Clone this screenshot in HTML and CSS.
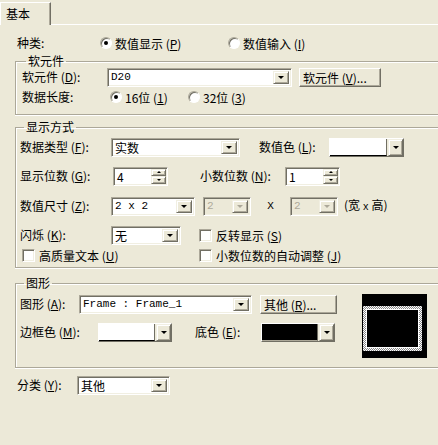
FILE: index.html
```html
<!DOCTYPE html>
<html lang="zh-CN">
<head>
    <meta charset="UTF-8">
    <title>数值显示</title>
    <link rel="stylesheet" href="styles.css">
</head>
<body>
    <div class="tabs">
        <div class="tab">基本</div>
        <div class="tab-fill"></div>
    </div>

    <div class="row kind-row">
        <span class="label w-kind">种类:</span>
        <label class="radio-opt w-opt1"><span class="radio checked"></span>数值显示 (<u>P</u>)</label>
        <label class="radio-opt"><span class="radio"></span>数值输入 (<u>I</u>)</label>
    </div>

    <fieldset class="group group-device">
        <legend>软元件</legend>
        <div class="row">
            <span class="label w-device">软元件 (<u>D</u>):</span>
            <div class="combo w-device-combo">
                <span class="combo-text mono">D20</span>
                <span class="drop"><i class="arrow"></i></span>
            </div>
            <button class="btn w-device-btn">软元件 (<u>V</u>)...</button>
        </div>
        <div class="row">
            <span class="label w-len">数据长度:</span>
            <label class="radio-opt w-opt16"><span class="radio checked"></span>16位 (<u>1</u>)</label>
            <label class="radio-opt"><span class="radio"></span>32位 (<u>3</u>)</label>
        </div>
    </fieldset>

    <fieldset class="group group-display">
        <legend>显示方式</legend>
        <div class="row">
            <span class="label w-91">数据类型 (<u>F</u>):</span>
            <div class="combo w-type">
                <span class="combo-text">实数</span>
                <span class="drop"><i class="arrow"></i></span>
            </div>
            <span class="label w-color-label gap-19">数值色 (<u>L</u>):</span>
            <div class="color-combo w-75">
                <span class="swatch"></span>
                <span class="drop"><i class="arrow"></i></span>
            </div>
        </div>
        <div class="row gap-top-9">
            <span class="label w-93">显示位数 (<u>G</u>):</span>
            <div class="spin">
                <span class="spin-text">4</span>
                <span class="spin-btns"><span class="spin-btn"><i class="arrow up"></i></span><span class="spin-btn"><i class="arrow"></i></span></span>
            </div>
            <span class="label w-85 gap-32">小数位数 (<u>N</u>):</span>
            <div class="spin">
                <span class="spin-text">1</span>
                <span class="spin-btns"><span class="spin-btn"><i class="arrow up"></i></span><span class="spin-btn"><i class="arrow"></i></span></span>
            </div>
        </div>
        <div class="row gap-top-10">
            <span class="label w-91">数值尺寸 (<u>Z</u>):</span>
            <div class="combo w-size">
                <span class="combo-text mono">2 x 2</span>
                <span class="drop"><i class="arrow"></i></span>
            </div>
            <div class="combo disabled w-48 gap-8">
                <span class="combo-text mono">2</span>
                <span class="drop"><i class="arrow"></i></span>
            </div>
            <span class="times mono">X</span>
            <div class="combo disabled w-48">
                <span class="combo-text mono">2</span>
                <span class="drop"><i class="arrow"></i></span>
            </div>
            <span class="label gap-6">(宽 <span class="mono">x</span> 高)</span>
        </div>
        <div class="row gap-top-9">
            <span class="label w-91">闪烁 (<u>K</u>):</span>
            <div class="combo w-blink">
                <span class="combo-text">无</span>
                <span class="drop"><i class="arrow"></i></span>
            </div>
            <label class="check-opt gap-18"><span class="check"></span>反转显示 (<u>S</u>)</label>
        </div>
        <div class="row checks-row">
            <label class="check-opt w-177"><span class="check"></span>高质量文本 (<u>U</u>)</label>
            <label class="check-opt"><span class="check"></span>小数位数的自动调整 (<u>J</u>)</label>
        </div>
    </fieldset>

    <fieldset class="group group-shape">
        <legend>图形</legend>
        <div class="shape-body">
            <div class="shape-fields">
                <div class="row">
                    <span class="label w-59">图形 (<u>A</u>):</span>
                    <div class="combo w-shape">
                        <span class="combo-text mono">Frame : Frame_1</span>
                        <span class="drop"><i class="arrow"></i></span>
                    </div>
                    <button class="btn w-other gap-8">其他 (<u>R</u>)...</button>
                </div>
                <div class="row gap-top-8">
                    <span class="label w-78">边框色 (<u>M</u>):</span>
                    <div class="color-combo w-74">
                        <span class="swatch"></span>
                        <span class="drop"><i class="arrow"></i></span>
                    </div>
                    <span class="label w-66 gap-23">底色 (<u>E</u>):</span>
                    <div class="color-combo w-74">
                        <span class="swatch black"></span>
                        <span class="drop"><i class="arrow"></i></span>
                    </div>
                </div>
            </div>
            <div class="preview">
                <div class="preview-frame"><div class="preview-inner"></div></div>
            </div>
        </div>
    </fieldset>

    <div class="row category-row">
        <span class="label w-60">分类 (<u>Y</u>):</span>
        <div class="combo w-cat">
            <span class="combo-text">其他</span>
            <span class="drop"><i class="arrow"></i></span>
        </div>
    </div>
</body>
</html>
```

FILE: styles.css
```css
html {
    overflow: hidden;
}
body {
    margin: 0;
    width: 438px;
    height: 445px;
    overflow: hidden;
    background: #ece9d8;
    color: #000;
    font-family: "Noto Sans CJK SC", "DejaVu Sans", sans-serif;
    font-size: 12px;
}
u {
    text-decoration: underline;
    text-underline-offset: 1px;
}
.mono {
    font-family: "Liberation Mono", "DejaVu Sans Mono", monospace;
    font-size: 10px;
}

/* tab strip */
.tabs {
    display: flex;
    height: 25px;
}
.tab {
    box-sizing: border-box;
    width: 51px;
    height: 23px;
    margin-top: 2px;
    padding: 4px 0 0 5px;
    line-height: 14px;
    border-left: 1px solid #fff;
    border-top: 1px solid #fff;
    border-right: 1px solid #716f64;
    box-shadow: inset -1px 0 #aca899;
}
.tab-fill {
    flex: 1;
    border-bottom: 1px solid #fff;
}

/* rows */
.row {
    display: flex;
    align-items: center;
    height: 20px;
    white-space: nowrap;
}
.label {
    flex: none;
    line-height: 20px;
}
.kind-row {
    margin-top: 8px;
    padding-left: 17px;
}
.category-row {
    margin-top: 7px;
    padding-left: 17px;
}
.gap-top-8 { margin-top: 8px; }
.gap-top-9 { margin-top: 9px; }
.gap-top-10 { margin-top: 10px; }
.gap-6 { margin-left: 6px; }
.gap-8 { margin-left: 8px; }
.gap-18 { margin-left: 18px; }
.gap-19 { margin-left: 19px; }
.gap-23 { margin-left: 23px; }
.gap-32 { margin-left: 32px; }

.w-kind { width: 83px; }
.w-opt1 { width: 128px; }
.w-device { width: 85px; }
.w-len { width: 88px; }
.w-opt16 { width: 78px; }
.w-91 { width: 91px; }
.w-93 { width: 93px; }
.w-85 { width: 85px; }
.w-color-label { width: 70px; }
.w-59 { width: 59px; }
.w-78 { width: 78px; }
.w-66 { width: 66px; }
.w-60 { width: 60px; }
.w-177 { width: 177px; }

/* group boxes, open on the right where the dialog continues */
.group {
    box-sizing: border-box;
    margin: 0 0 0 15px;
    width: 423px;
    border: 1px solid #aca899;
    border-right: 0;
    box-shadow: inset 1px 1px #fff, 0 1px #fff;
    padding: 0;
}
.group legend {
    padding: 0 2px;
    margin-left: 4px;
    line-height: 12px;
}
.group-device {
    margin-top: 2px;
    padding: 0 0 7px 6px;
}
.group-display {
    margin-top: 6px;
    padding: 4px 0 2px 4px;
}
.checks-row {
    padding-left: 2px;
}
.group-shape {
    margin-top: 9px;
    padding: 5px 0 9px 4px;
}
.shape-body {
    display: flex;
}
.shape-fields {
    width: 342px;
}

/* radios and checkboxes */
.radio-opt, .check-opt {
    display: flex;
    align-items: center;
    flex: none;
}
.radio {
    box-sizing: border-box;
    width: 12px;
    height: 12px;
    margin-right: 3px;
    border-radius: 50%;
    background: #fff;
    border: 1px solid;
    border-color: #aca899 #fff #fff #aca899;
    box-shadow: inset 1px 1px #716f64;
    display: flex;
    align-items: center;
    justify-content: center;
}
.radio.checked::after {
    content: "";
    width: 4px;
    height: 4px;
    border-radius: 50%;
    background: #000;
}
.check {
    box-sizing: border-box;
    width: 13px;
    height: 13px;
    margin-right: 4px;
    background: #fff;
    border: 1px solid;
    border-color: #aca899 #fff #fff #aca899;
    box-shadow: inset 1px 1px #716f64, inset -1px -1px #f1efe2;
}

/* combo boxes */
.combo, .spin {
    box-sizing: border-box;
    display: flex;
    align-items: stretch;
    flex: none;
    height: 19px;
    padding: 2px;
    background: #fff;
    border: 1px solid;
    border-color: #aca899 #fff #fff #aca899;
    box-shadow: inset 1px 1px #716f64, inset -1px -1px #f1efe2;
}
.combo-text, .spin-text {
    flex: 1;
    display: flex;
    align-items: center;
    padding-left: 1px;
    line-height: 13px;
}
.combo-text.mono {
    font-size: 11px;
}
.drop, .spin-btn {
    box-sizing: border-box;
    width: 16px;
    display: flex;
    align-items: center;
    justify-content: center;
    background: #ece9d8;
    border: 1px solid;
    border-color: #f1efe2 #716f64 #716f64 #f1efe2;
    box-shadow: inset 1px 1px #fff, inset -1px -1px #aca899;
}
.arrow {
    width: 0;
    height: 0;
    border-left: 3px solid transparent;
    border-right: 3px solid transparent;
    border-top: 3px solid #000;
}
.arrow.up {
    border-top: 0;
    border-bottom: 3px solid #000;
}
.combo.disabled {
    background: #ece9d8;
    color: #aca899;
}
.combo.disabled .arrow {
    border-top-color: #aca899;
}
.times {
    width: 39px;
    text-align: center;
    font-size: 11px;
}
.w-device-combo { width: 185px; }
.w-type { width: 129px; }
.w-size { width: 84px; }
.w-48 { width: 48px; }
.w-blink { width: 70px; }
.w-shape { width: 173px; }
.w-cat { width: 93px; }

/* spin boxes */
.spin {
    width: 55px;
}
.spin-btns {
    display: flex;
    flex-direction: column;
    width: 15px;
    margin: -1px -1px -1px 0;
}
.spin-btn {
    width: 15px;
    flex: 1;
}
.spin-btn .arrow {
    border-left-width: 2px;
    border-right-width: 2px;
    border-top-width: 2px;
}
.spin-btn .arrow.up {
    border-bottom-width: 2px;
}

/* colour pickers */
.color-combo {
    box-sizing: border-box;
    display: flex;
    flex: none;
    height: 19px;
    border: 1px solid;
    border-color: #fff #716f64 #716f64 #fff;
    background: #ece9d8;
}
.color-combo .swatch {
    flex: 1;
    background: #fff;
    border-bottom: 1px solid #000;
    border-right: 1px solid #716f64;
}
.color-combo .swatch.black {
    background: #000;
    border-bottom-color: #aca899;
}
.color-combo .drop {
    width: 15px;
    margin-left: 1px;
}
.w-75 { width: 75px; }
.w-74 { width: 74px; }

/* buttons */
.btn {
    box-sizing: border-box;
    flex: none;
    height: 19px;
    padding: 0 0 0 3px;
    font: inherit;
    text-align: left;
    white-space: nowrap;
    background: #ece9d8;
    border: 1px solid;
    border-color: #fff #716f64 #716f64 #fff;
    box-shadow: inset -1px -1px #aca899;
}
.w-device-btn { width: 82px; margin-left: 7px; }
.w-other { width: 77px; }

/* shape preview */
.preview {
    box-sizing: border-box;
    width: 65px;
    height: 64px;
    padding: 12px 5px 0 1px;
    background: #000;
}
.preview-frame {
    height: 39px;
    padding: 3px;
    background: repeating-conic-gradient(#fff 0 25%, #8a8a8a 0 50%) 0 0 / 2px 2px;
}
.preview-inner {
    box-sizing: border-box;
    height: 100%;
    border: 1px solid #fff;
    background: #000;
}
```
